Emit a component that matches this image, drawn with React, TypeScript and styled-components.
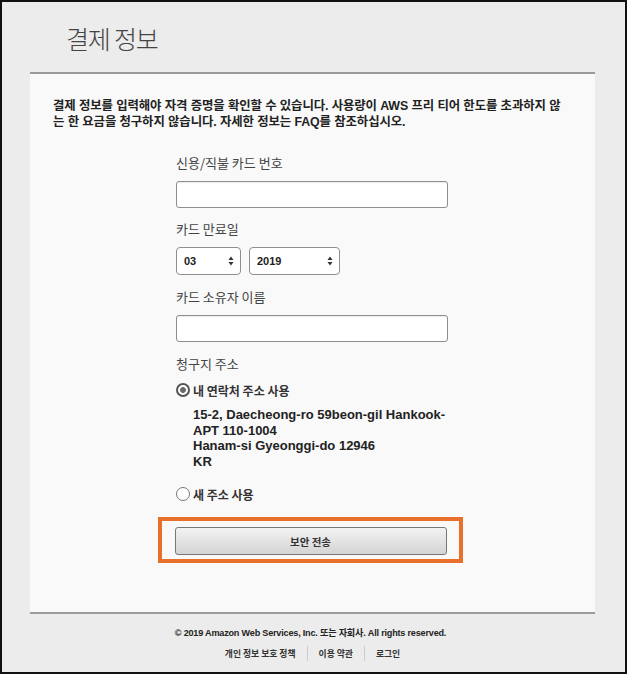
import React from 'react';
import styled, { createGlobalStyle } from 'styled-components';

const GlobalStyle = createGlobalStyle`
  html, body {
    margin: 0;
    padding: 0;
    background: #ffffff;
  }
  body {
    font-family: 'Liberation Sans', 'Noto Sans CJK KR', sans-serif;
  }
`;

const Frame = styled.div`
  box-sizing: border-box;
  width: 627px;
  height: 674px;
  border: 2px solid #111;
  background: #ececec;
  display: flex;
  flex-direction: column;
`;

const Title = styled.h1`
  margin: 0;
  padding: 18px 0 0 64px;
  box-sizing: border-box;
  height: 70px;
  font-family: 'Noto Sans CJK KR', sans-serif;
  font-size: 25px;
  font-weight: 300;
  color: #444;
  letter-spacing: -1.2px;
`;

const Panel = styled.div`
  margin: 0 30px 0 28px;
  background: #f9f9f9;
  border-top: 2px solid #9a9a9a;
  border-bottom: 2px solid #9a9a9a;
  height: 542px;
  box-sizing: border-box;
  padding: 24px 20px 0 23px;
`;

const Intro = styled.p`
  margin: 0;
  font-size: 12.4px;
  line-height: 16px;
  font-weight: bold;
  color: #222;
  letter-spacing: -0.1px;
  white-space: nowrap;
`;

const Form = styled.div`
  width: 274px;
  margin: 24px 0 0 123px;
  display: flex;
  flex-direction: column;
`;

const Label = styled.div<{ $top?: number }>`
  font-family: 'Noto Sans CJK KR', sans-serif;
  font-size: 13px;
  color: #444;
  line-height: 18px;
  margin-top: ${(p) => p.$top ?? 0}px;
  margin-bottom: 9px;
`;

const TextInput = styled.input`
  box-sizing: border-box;
  width: 272px;
  height: 27px;
  margin: 0;
  border: 1.5px solid #8f8f8f;
  border-radius: 3px;
  background: #fff;
  box-shadow: inset 0 1px 1px rgba(0, 0, 0, 0.08);
`;

const SelectRow = styled.div`
  display: flex;
  gap: 8px;
`;

const Select = styled.div<{ $w: number }>`
  box-sizing: border-box;
  width: ${(p) => p.$w}px;
  height: 28px;
  border: 1.5px solid #8f8f8f;
  border-radius: 4px;
  background: #fff;
  display: flex;
  align-items: center;
  justify-content: space-between;
  padding: 0 6px 0 7px;
  font-size: 11px;
  font-weight: bold;
  color: #222;
`;

const Radio = styled.label`
  display: flex;
  align-items: center;
  gap: 3px;
  height: 16px;
  font-family: 'Noto Sans CJK KR', sans-serif;
  font-size: 12px;
  font-weight: bold;
  color: #333;
`;

const RadioDot = styled.span<{ $checked?: boolean }>`
  box-sizing: border-box;
  width: 14px;
  height: 14px;
  border-radius: 50%;
  background: ${(p) =>
    p.$checked ? 'radial-gradient(circle, #6a6a6a 0 2.6px, #fff 3.2px)' : '#fff'};
  border: ${(p) => (p.$checked ? '2.5px solid #555' : '1.3px solid #777')};
`;

const Address = styled.div`
  margin: 9px 0 0 17px;
  font-size: 13px;
  line-height: 15.5px;
  font-weight: bold;
  color: #222;
  white-space: nowrap;
`;

const Spacer = styled.div<{ $h: number }>`
  height: ${(p) => p.$h}px;
`;

const Highlight = styled.div`
  margin: 15px 0 0 -18px;
  width: 305px;
  height: 46px;
  box-sizing: border-box;
  border: 4px solid #e8702a;
  display: flex;
  align-items: center;
  justify-content: center;
`;

const SubmitButton = styled.button`
  box-sizing: border-box;
  width: 272px;
  height: 28px;
  border: 1px solid #777;
  border-radius: 3px;
  background: linear-gradient(#f3f3f3, #d4d4d4);
  font-family: 'Noto Sans CJK KR', sans-serif;
  font-size: 10.5px;
  font-weight: bold;
  color: #333;
  margin-top: 2px;
`;

const Footer = styled.div`
  display: flex;
  flex-direction: column;
  align-items: center;
  padding: 11px 0 0 0;
  margin-left: -6px;
  gap: 7px;
`;

const Copyright = styled.div`
  font-size: 9.1px;
  font-weight: bold;
  color: #222;
  letter-spacing: -0.2px;
`;

const Links = styled.div`
  display: flex;
  align-items: center;
  margin-left: 4px;
  font-family: 'Noto Sans CJK KR', sans-serif;
  font-size: 8.8px;
  font-weight: bold;
  color: #333;
`;

const LinkItem = styled.span<{ $first?: boolean }>`
  padding: 0 11px;
  border-left: ${(p) => (p.$first ? 'none' : '1px solid #ccc')};
  line-height: 15px;
`;

const Arrows = () => (
  <svg width="6" height="10" viewBox="0 0 6 10">
    <path d="M3 0.5 L5.5 4 H0.5 Z" fill="#333" />
    <path d="M3 9.5 L5.5 6 H0.5 Z" fill="#333" />
  </svg>
);

const App: React.FC = () => (
  <>
    <GlobalStyle />
    <Frame>
      <Title>결제 정보</Title>
      <Panel>
        <Intro>
          결제 정보를 입력해야 자격 증명을 확인할 수 있습니다. 사용량이 AWS 프리 티어 한도를 초과하지 않
          <br />는 한 요금을 청구하지 않습니다. 자세한 정보는 FAQ를 참조하십시오.
        </Intro>
        <Form>
          <Label>신용/직불 카드 번호</Label>
          <TextInput />
          <Label $top={12}>카드 만료일</Label>
          <SelectRow>
            <Select $w={65}>
              03 <Arrows />
            </Select>
            <Select $w={91}>
              2019 <Arrows />
            </Select>
          </SelectRow>
          <Label $top={13}>카드 소유자 이름</Label>
          <TextInput />
          <Label $top={13}>청구지 주소</Label>
          <Radio>
            <RadioDot $checked />내 연락처 주소 사용
          </Radio>
          <Address>
            15-2, Daecheong-ro 59beon-gil Hankook-
            <br />
            APT 110-1004
            <br />
            Hanam-si Gyeonggi-do 12946
            <br />
            KR
          </Address>
          <Spacer $h={17} />
          <Radio>
            <RadioDot />새 주소 사용
          </Radio>
          <Highlight>
            <SubmitButton>보안 전송</SubmitButton>
          </Highlight>
        </Form>
      </Panel>
      <Footer>
        <Copyright>© 2019 Amazon Web Services, Inc. 또는 자회사. All rights reserved.</Copyright>
        <Links>
          <LinkItem $first>개인 정보 보호 정책</LinkItem>
          <LinkItem>이용 약관</LinkItem>
          <LinkItem>로그인</LinkItem>
        </Links>
      </Footer>
    </Frame>
  </>
);

export default App;
